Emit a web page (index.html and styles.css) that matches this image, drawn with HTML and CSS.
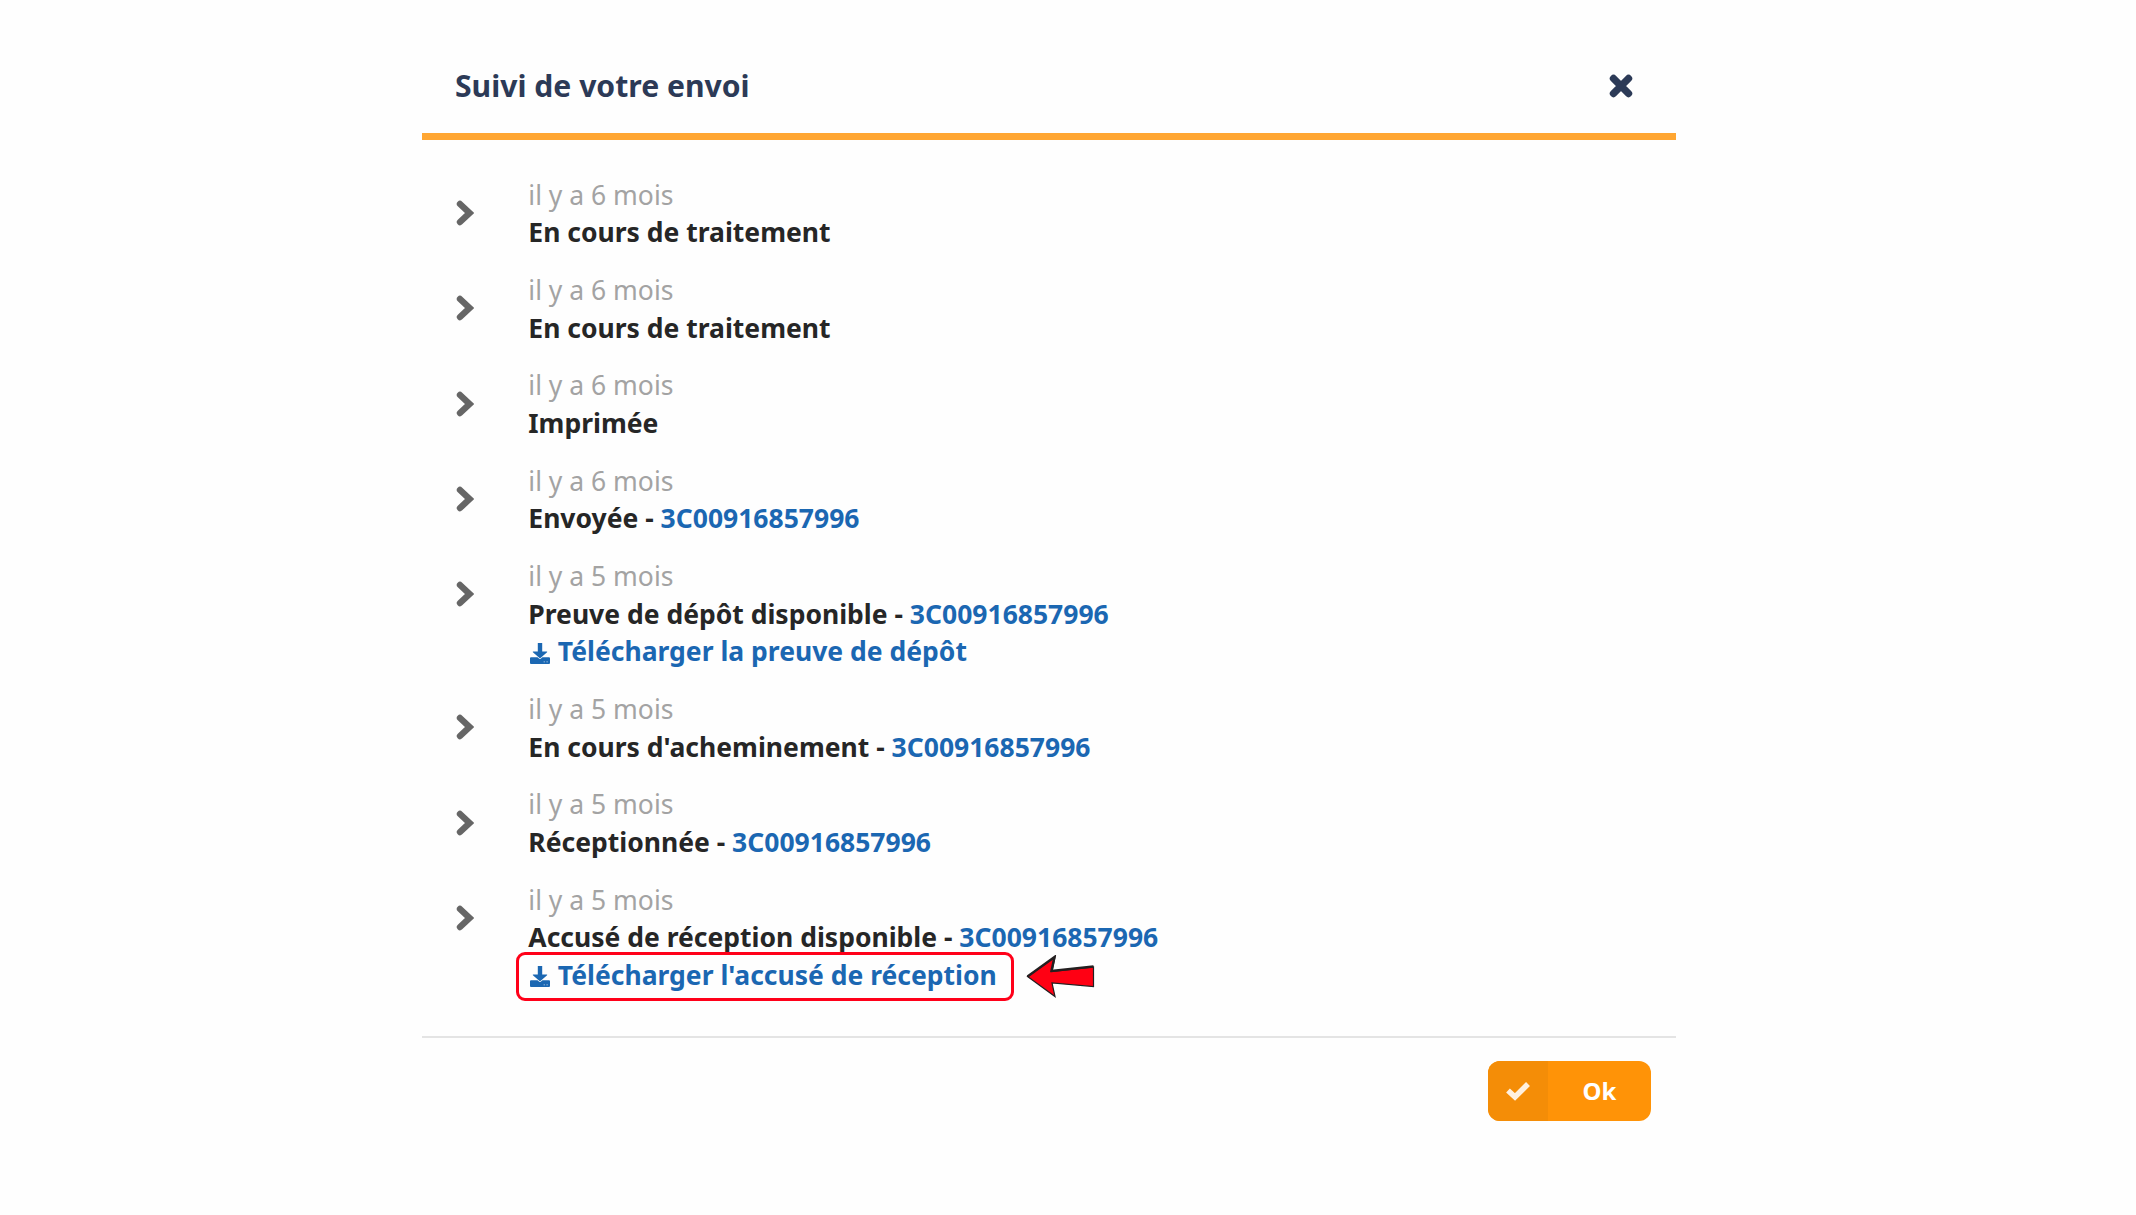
FILE: index.html
```
<!DOCTYPE html>
<html lang="fr">
<head>
    <meta charset="UTF-8">
    <meta name="viewport" content="width=device-width, initial-scale=1.0">
    <title>Suivi de votre envoi</title>
    <link rel="stylesheet" href="styles.css">
</head>
<body>

    <!-- Shared icons -->
    <svg class="sprite" width="0" height="0">
        <symbol id="chevron" viewBox="0 0 18 26">
            <path d="M4 4l9.500 9L4 22" fill="none" stroke="currentColor" stroke-width="6.400" stroke-linecap="round"/>
        </symbol>
        <symbol id="download" viewBox="0 0 20 21">
            <path d="M7.800 0h4.400v8.500h4.600q.8 0 .3.700L10.500 15q-.5.500-1 0L2.900 9.200q-.5-.7.300-.7h4.600z"/>
            <path d="M1 14.200h6.500l1.800 1.500q.7.500 1.400 0l1.800-1.500H19q1 0 1 1V20q0 1-1 1H1q-1 0-1-1v-4.800q0-1 1-1zm12.700 4.300v.8h1v-.8zm2.900 0v.8h1v-.8z" fill-rule="evenodd"/>
        </symbol>
    </svg>

    <div class="modal">
        <header class="modal-header">
            <h1>Suivi de votre envoi</h1>
            <button class="close" aria-label="Fermer">
                <svg width="24" height="24" viewBox="0 0 24 24"><path d="M4.500 4.500l15 15M19.500 4.500l-15 15" stroke="currentColor" stroke-width="7.400" stroke-linecap="round"/></svg>
            </button>
        </header>

        <ul class="steps">
            <li class="step">
                <svg class="chevron"><use href="#chevron"/></svg>
                <div class="step-text">
                    <div class="date">il y a 6 mois</div>
                    <div class="status">En cours de traitement</div>
                </div>
            </li>
            <li class="step">
                <svg class="chevron"><use href="#chevron"/></svg>
                <div class="step-text">
                    <div class="date">il y a 6 mois</div>
                    <div class="status">En cours de traitement</div>
                </div>
            </li>
            <li class="step">
                <svg class="chevron"><use href="#chevron"/></svg>
                <div class="step-text">
                    <div class="date">il y a 6 mois</div>
                    <div class="status">Imprimée</div>
                </div>
            </li>
            <li class="step">
                <svg class="chevron"><use href="#chevron"/></svg>
                <div class="step-text">
                    <div class="date">il y a 6 mois</div>
                    <div class="status">Envoyée - <a href="#">3C00916857996</a></div>
                </div>
            </li>
            <li class="step">
                <svg class="chevron"><use href="#chevron"/></svg>
                <div class="step-text">
                    <div class="date">il y a 5 mois</div>
                    <div class="status">Preuve de dépôt disponible - <a href="#">3C00916857996</a></div>
                    <a class="download" href="#"><svg><use href="#download"/></svg>Télécharger la preuve de dépôt</a>
                </div>
            </li>
            <li class="step">
                <svg class="chevron"><use href="#chevron"/></svg>
                <div class="step-text">
                    <div class="date">il y a 5 mois</div>
                    <div class="status">En cours d'acheminement - <a href="#">3C00916857996</a></div>
                </div>
            </li>
            <li class="step">
                <svg class="chevron"><use href="#chevron"/></svg>
                <div class="step-text">
                    <div class="date">il y a 5 mois</div>
                    <div class="status">Réceptionnée - <a href="#">3C00916857996</a></div>
                </div>
            </li>
            <li class="step">
                <svg class="chevron"><use href="#chevron"/></svg>
                <div class="step-text">
                    <div class="date">il y a 5 mois</div>
                    <div class="status">Accusé de réception disponible - <a href="#">3C00916857996</a></div>
                    <a class="download highlighted" href="#"><svg><use href="#download"/></svg>Télécharger l'accusé de réception
                        <span class="frame"></span>
                        <svg class="arrow" viewBox="0 0 70 44">
                            <path d="M1.500 21.500L29 2l-3 14.500L67.500 12v19.500L26 28l3 13.500z" fill="#ff0013" stroke="#231f20" stroke-width="1.200"/>
                            <path d="M1.500 21.500L28.500 2l-3 14L67.500 11.500" fill="none" stroke="#231f20" stroke-width="2.400"/>
                        </svg>
                    </a>
                </div>
            </li>
        </ul>

        <footer class="modal-footer">
            <button class="ok">
                <span class="ok-icon">
                    <svg width="26" height="20" viewBox="0 0 26 20"><path d="M3 9.500l7 6.500L23 3" fill="none" stroke="currentColor" stroke-width="5.500"/></svg>
                </span>
                <span class="ok-label">Ok</span>
            </button>
        </footer>
    </div>

</body>
</html>
```

FILE: styles.css
```
* {
    box-sizing: border-box;
}

body {
    margin: 0;
    background: #fefefe;
    font-family: 'Noto Sans', sans-serif;
    font-size: 26.500px;
    line-height: 37.500px;
    color: #262626;
}

.sprite {
    position: absolute;
}

.modal {
    width: 1254px;
    margin-left: 422px;
}

.modal-header {
    display: flex;
    align-items: center;
    justify-content: space-between;
    height: 140px;
    padding: 39px 43px 0 33px;
    border-bottom: 7px solid #ffa632;
    color: #2c3a57;
}

.modal-header h1 {
    margin: 0;
    font-size: 30.150px;
    font-weight: 700;
}

.close {
    display: flex;
    padding: 0;
    border: none;
    background: none;
    color: #2c3a57;
}

.steps {
    display: flex;
    flex-direction: column;
    gap: 20.350px;
    height: 896px;
    margin: 0;
    padding: 36.800px 0 0 34px;
    list-style: none;
}

.step {
    display: flex;
    gap: 54.300px;
}

.chevron {
    flex: none;
    width: 18px;
    height: 26px;
    margin-top: 23.200px;
    color: #666;
}

.date {
    color: #a3a3a3;
}

.status,
.download {
    font-weight: 700;
}

a {
    color: #1b67b2;
    text-decoration: none;
}

.download {
    display: flex;
    align-items: center;
    width: max-content;
    fill: currentColor;
}

.download svg {
    width: 20px;
    height: 21px;
    margin: 3px 7.500px 0 2px;
}

.highlighted {
    position: relative;
}

/* Red frame and arrow lie over the download link */
.frame {
    position: absolute;
    left: -12px;
    top: -5px;
    width: 498px;
    height: 49px;
    border: 3px solid #ff0019;
    border-radius: 9px;
}

.highlighted .arrow {
    position: absolute;
    left: 498px;
    top: -1.500px;
    width: 70px;
    height: 44px;
    margin: 0;
}

.modal-footer {
    display: flex;
    justify-content: flex-end;
    padding: 23px 25px 0;
    border-top: 2px solid #e4e4e4;
}

.ok {
    display: flex;
    width: 163px;
    height: 60px;
    padding: 0;
    overflow: hidden;
    border: none;
    border-radius: 12px;
    background: #ff9307;
    color: #fff;
    font: 700 24px 'Noto Sans', sans-serif;
}

.ok-icon {
    display: flex;
    align-items: center;
    justify-content: center;
    width: 60px;
    height: 60px;
    background: #f48d07;
    color: #fff0de;
}

.ok-label {
    flex: 1;
    line-height: 60px;
    text-align: center;
}
```
